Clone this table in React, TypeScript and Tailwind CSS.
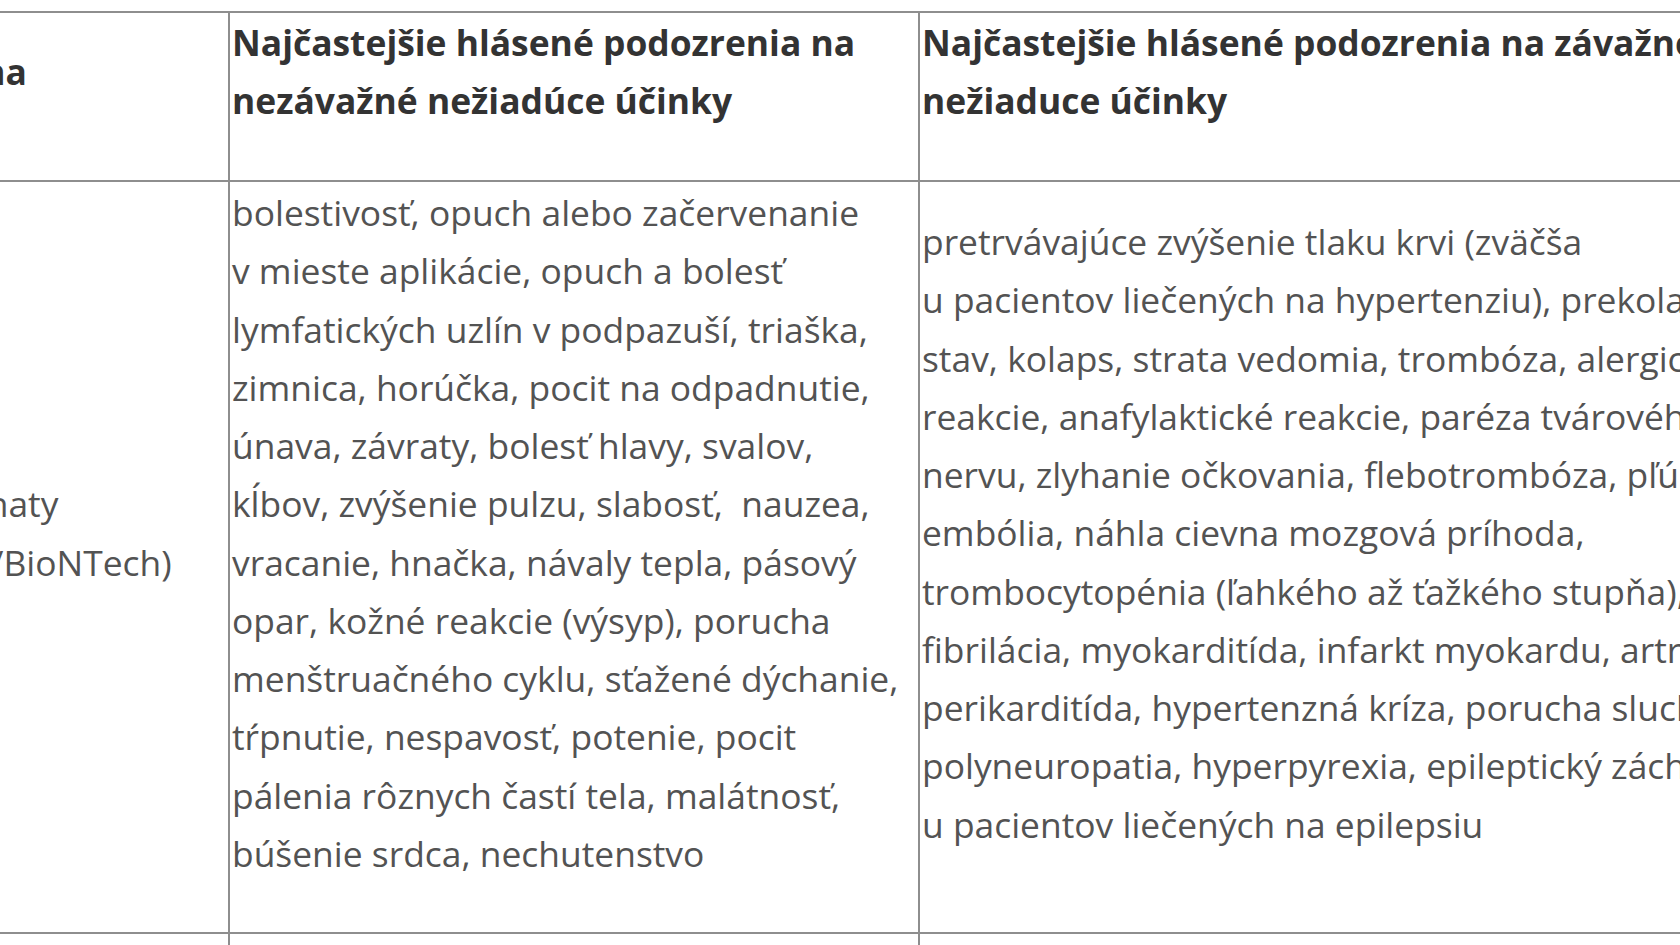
import React from "react";

const col2 = [
  "bolestivosť, opuch alebo začervenanie",
  "v mieste aplikácie, opuch a bolesť",
  "lymfatických uzlín v podpazuší, triaška,",
  "zimnica, horúčka, pocit na odpadnutie,",
  "únava, závraty, bolesť hlavy, svalov,",
  "kĺbov, zvýšenie pulzu, slabosť,\u00a0 nauzea,",
  "vracanie, hnačka, návaly tepla, pásový",
  "opar, kožné reakcie (výsyp), porucha",
  "menštruačného cyklu, sťažené dýchanie,",
  "tŕpnutie, nespavosť, potenie, pocit",
  "pálenia rôznych častí tela, malátnosť,",
  "búšenie srdca, nechutenstvo",
];

const col3 = [
  "pretrvávajúce zvýšenie tlaku krvi (zväčša",
  "u pacientov liečených na hypertenziu), prekolaptický",
  "stav, kolaps, strata vedomia, trombóza, alergické",
  "reakcie, anafylaktické reakcie, paréza tvárového",
  "nervu, zlyhanie očkovania, flebotrombóza, pľúcna",
  "embólia, náhla cievna mozgová príhoda,",
  "trombocytopénia (ľahkého až ťažkého stupňa), predsieňová",
  "fibrilácia, myokarditída, infarkt myokardu, artritída,",
  "perikarditída, hypertenzná kríza, porucha sluchu,",
  "polyneuropatia, hyperpyrexia, epileptický záchvat",
  "u pacientov liečených na epilepsiu",
];

function Lines({ lines }: { lines: string[] }) {
  return (
    <p className="mb-[48px] whitespace-nowrap">
      {lines.map((l, i) => (
        <React.Fragment key={i}>
          {l}
          {i < lines.length - 1 && <br />}
        </React.Fragment>
      ))}
    </p>
  );
}

export default function App() {
  return (
    <div
      className="w-[1680px] h-[945px] overflow-hidden bg-white text-[35.4px] leading-[58.25px] text-[#535353]"
      style={{ fontFamily: '"Open Sans", "Noto Sans", sans-serif' }}
    >
      <table className="ml-[-117px] mt-[11px] border-collapse table-fixed w-[2000px]">
        <colgroup>
          <col className="w-[345px]" />
          <col className="w-[690px]" />
          <col className="w-[965px]" />
        </colgroup>
        <tbody>
          <tr className="h-[168px]">
            <td className="border-2 border-[#8e8e8e] px-[2px] pt-0 pb-[2px] align-middle font-bold text-[#333333]">
              <Lines lines={["Vakcína"]} />
            </td>
            <td className="border-2 border-[#8e8e8e] px-[2px] pt-0 pb-[2px] align-middle font-bold text-[#333333]">
              <Lines lines={["Najčastejšie hlásené podozrenia na", "nezávažné nežiadúce účinky"]} />
            </td>
            <td className="border-2 border-[#8e8e8e] px-[2px] pt-0 pb-[2px] align-middle font-bold text-[#333333]">
              <Lines lines={["Najčastejšie hlásené podozrenia na závažné", "nežiaduce účinky"]} />
            </td>
          </tr>
          <tr className="h-[752px]">
            <td className="border-2 border-[#8e8e8e] px-[2px] py-0 align-middle">
              <Lines lines={["Comirnaty", "(Pfizer/BioNTech)"]} />
            </td>
            <td className="border-2 border-[#8e8e8e] px-[2px] py-0 align-middle">
              <Lines lines={col2} />
            </td>
            <td className="border-2 border-[#8e8e8e] px-[2px] py-0 align-middle">
              <Lines lines={col3} />
            </td>
          </tr>
          <tr className="h-[100px]">
            <td className="border-2 border-[#8e8e8e]"></td>
            <td className="border-2 border-[#8e8e8e]"></td>
            <td className="border-2 border-[#8e8e8e]"></td>
          </tr>
        </tbody>
      </table>
    </div>
  );
}
